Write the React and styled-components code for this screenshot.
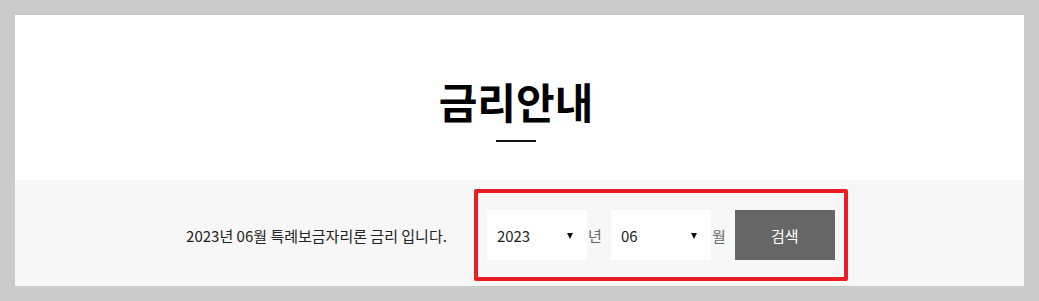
import React from "react";
import styled, { createGlobalStyle } from "styled-components";

const GlobalStyle = createGlobalStyle`
  html, body {
    margin: 0;
    padding: 0;
    background: #cbcbcb;
    font-family: "Noto Sans CJK KR", "Noto Sans", sans-serif;
  }
`;

const Page = styled.div`
  padding: 15px;
  width: 1039px;
  height: 301px;
  box-sizing: border-box;
`;

const Panel = styled.div`
  background: #fff;
  display: flex;
  flex-direction: column;
  height: 271px;
`;

const Header = styled.div`
  display: flex;
  flex-direction: column;
  align-items: center;
  padding: 62px 7px 0 0;
  height: 165px;
  box-sizing: border-box;
`;

const Title = styled.h2`
  margin: 0;
  font-size: 42px;
  line-height: 48px;
  font-weight: 700;
  color: #000;
  letter-spacing: 0;
`;

const Underline = styled.span`
  display: block;
  width: 40px;
  height: 2px;
  background: #111;
  margin-top: 15px;
`;

const SearchBar = styled.div`
  position: relative;
  flex: 1;
  background: #f7f7f7;
  display: flex;
  align-items: center;
  justify-content: center;
  gap: 27px;
  padding: 4px 5px 0 0;

  &::before {
    content: "";
    position: absolute;
    z-index: -1;
    top: 0;
    left: -11px;
    right: -3px;
    bottom: -3px;
    background: #c4c4c4;
    pointer-events: none;
  }
`;

const Notice = styled.p`
  margin: 0;
  font-size: 15px;
  color: #222;
  letter-spacing: 0;
`;

const Form = styled.form`
  display: flex;
  align-items: center;
  border: 4px solid #ec1c24;
  border-radius: 2px;
  padding: 17px 9px;
`;

const SelectWrap = styled.div`
  position: relative;
  width: 100px;
  height: 50px;

  &::after {
    content: "";
    position: absolute;
    right: 14px;
    top: 23px;
    border-left: 3px solid transparent;
    border-right: 3px solid transparent;
    border-top: 6px solid #111;
    pointer-events: none;
  }
`;

const Select = styled.select`
  appearance: none;
  -webkit-appearance: none;
  width: 100%;
  height: 100%;
  border: 0;
  outline: none;
  background: #fff;
  padding: 0 0 0 10px;
  font-family: inherit;
  font-size: 15px;
  color: #222;
  border-radius: 0;
`;

const Unit = styled.span`
  font-size: 15px;
  color: #666;
  width: 24px;
  padding-left: 1px;
  box-sizing: border-box;
`;

const Button = styled.button`
  width: 100px;
  height: 50px;
  border: 0;
  background: #666;
  color: #fff;
  font-family: inherit;
  font-size: 15px;
  cursor: pointer;
`;

export default function App() {
  return (
    <>
      <GlobalStyle />
      <Page>
        <Panel>
          <Header>
            <Title>금리안내</Title>
            <Underline />
          </Header>
          <SearchBar>
            <Notice>2023년 06월 특례보금자리론 금리 입니다.</Notice>
            <Form onSubmit={(e) => e.preventDefault()}>
              <SelectWrap>
                <Select defaultValue="2023">
                  <option>2023</option>
                  <option>2022</option>
                  <option>2021</option>
                </Select>
              </SelectWrap>
              <Unit>년</Unit>
              <SelectWrap>
                <Select defaultValue="06">
                  {["01", "02", "03", "04", "05", "06", "07", "08", "09", "10", "11", "12"].map((m) => (
                    <option key={m}>{m}</option>
                  ))}
                </Select>
              </SelectWrap>
              <Unit>월</Unit>
              <Button type="submit">검색</Button>
            </Form>
          </SearchBar>
        </Panel>
      </Page>
    </>
  );
}
